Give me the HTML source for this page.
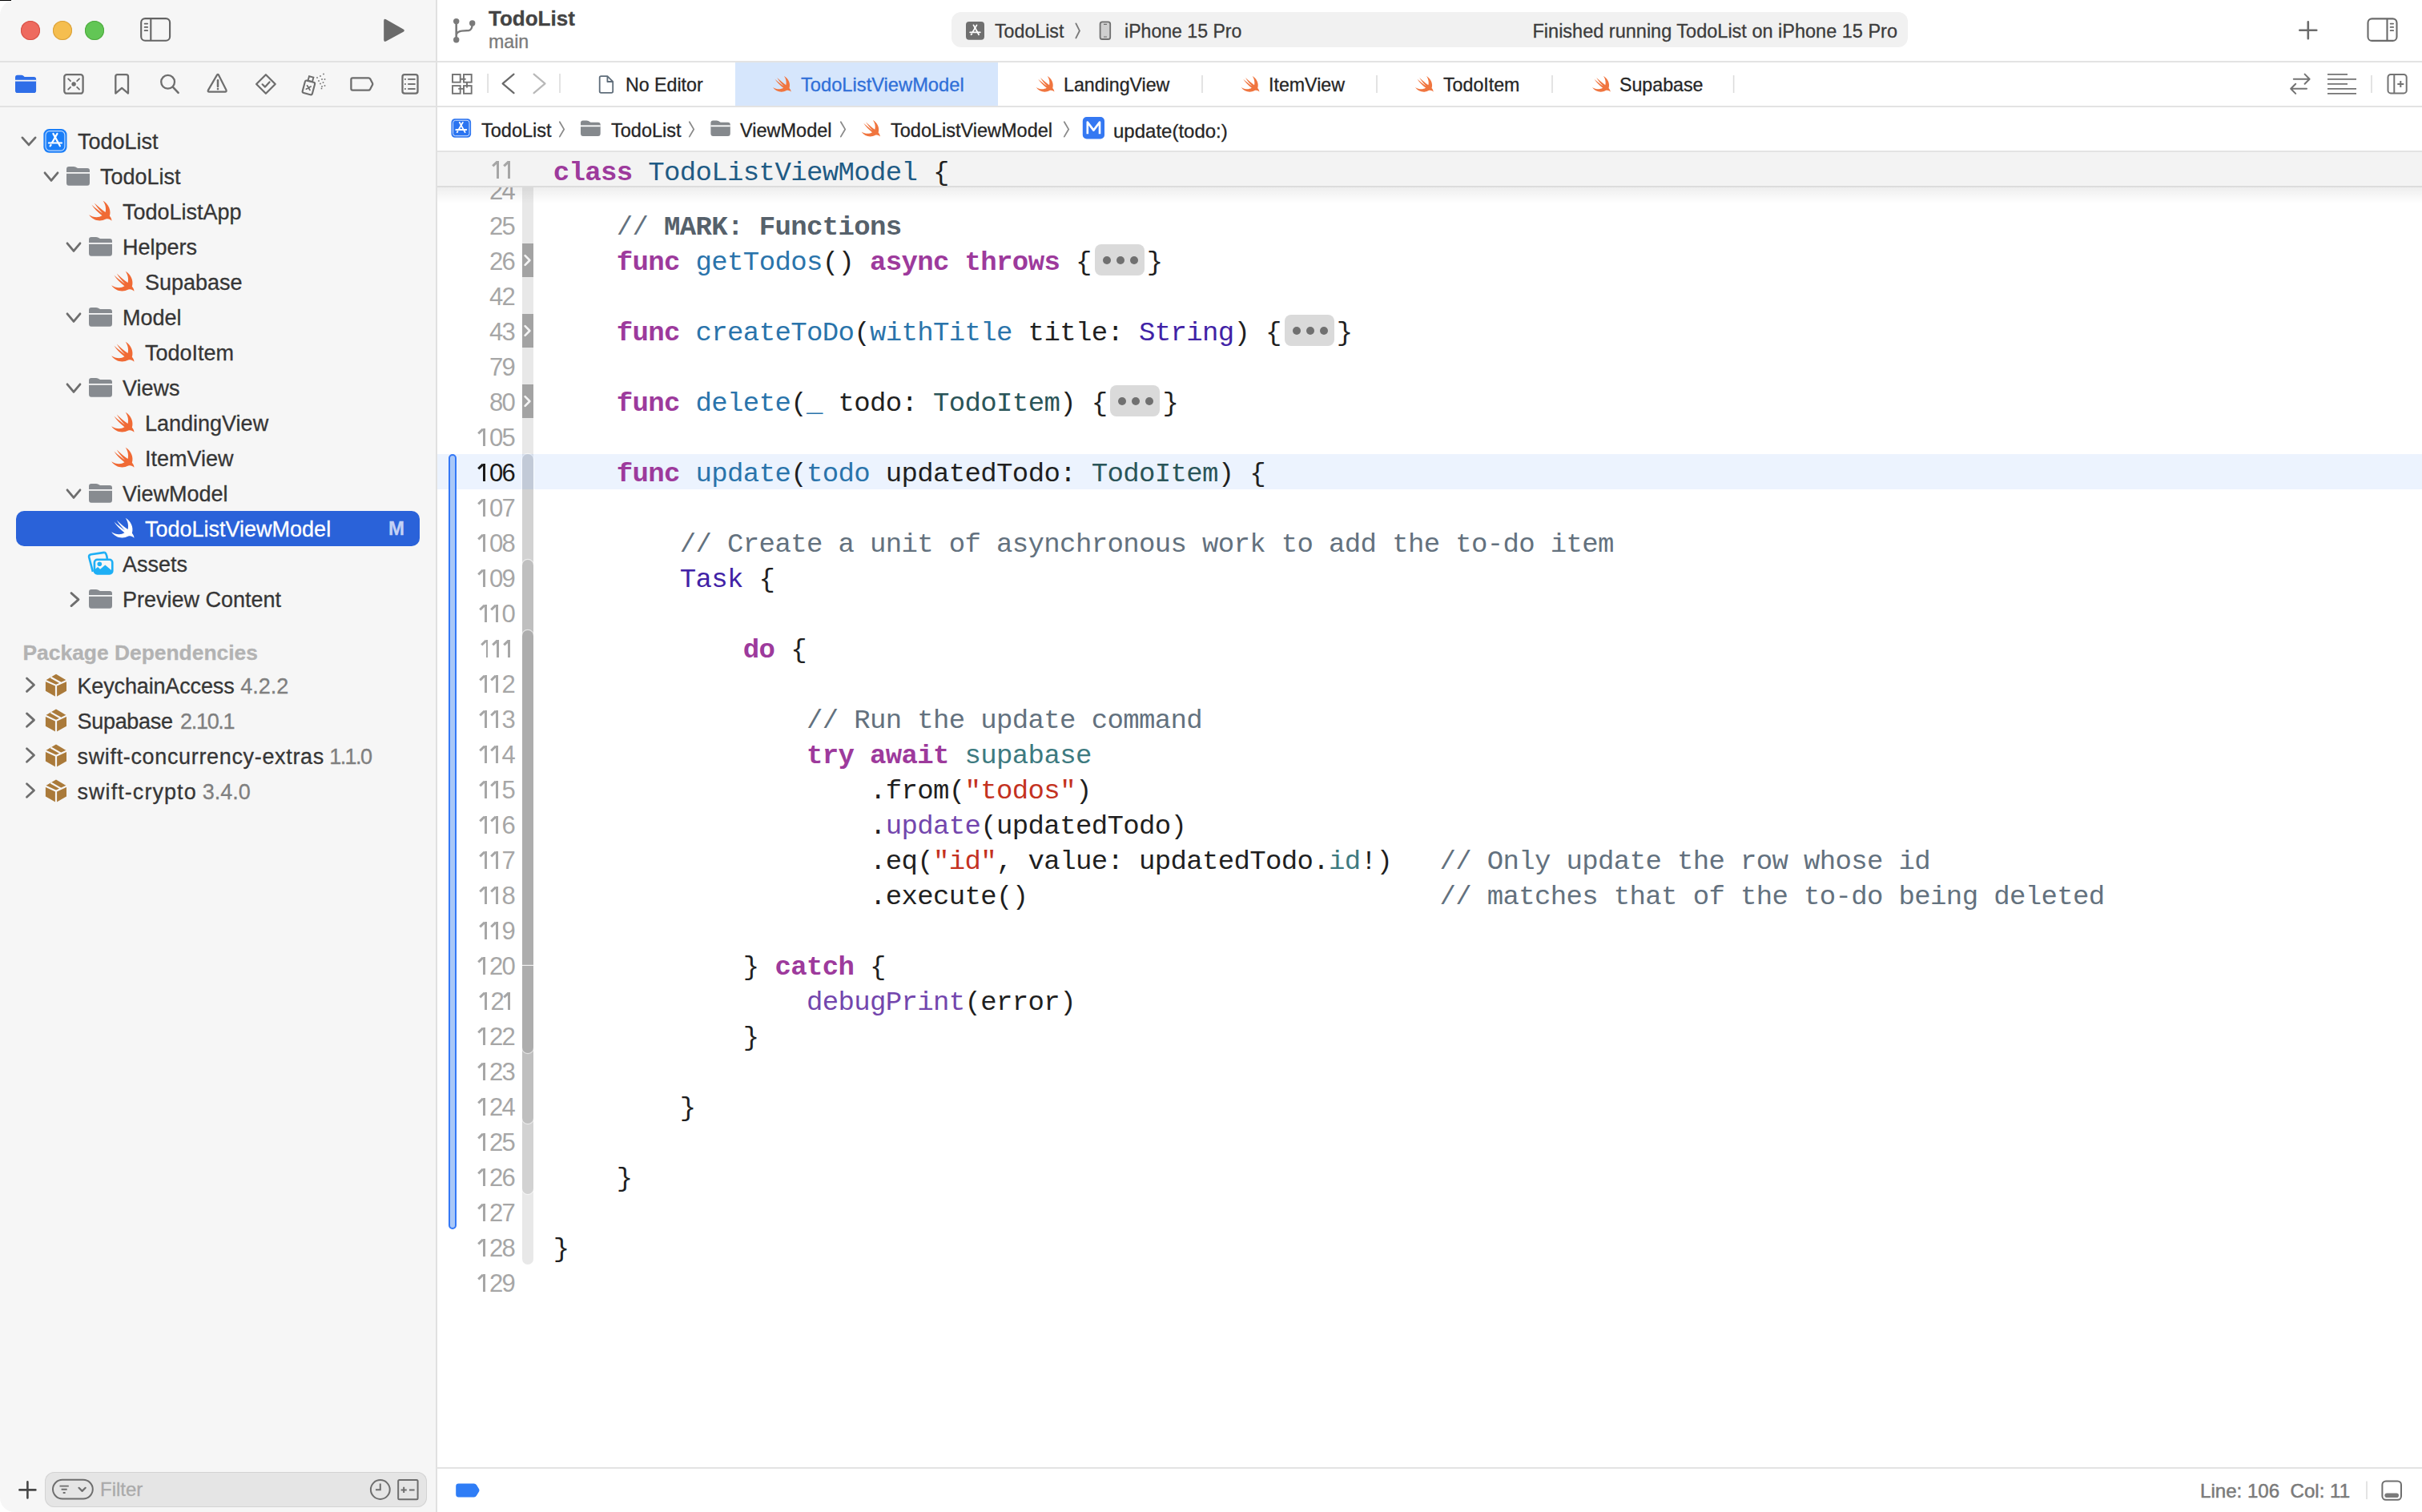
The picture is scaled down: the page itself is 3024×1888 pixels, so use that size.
<!DOCTYPE html>
<html><head><meta charset="utf-8"><style>
*{margin:0;padding:0;box-sizing:border-box}
html,body{width:3024px;height:1888px;overflow:hidden;background:#fff}
body{position:relative;font-family:"Liberation Sans",sans-serif;color:#262626}
.a{position:absolute}
.t{position:absolute;white-space:pre;line-height:1;-webkit-text-stroke:0.3px currentColor}
.code{position:absolute;left:690.7px;font-family:"Liberation Mono",monospace;font-size:34px;letter-spacing:-0.64px;line-height:44px;color:#1f1f1f;white-space:pre}
.ln{position:absolute;left:560px;width:82px;text-align:right;font-family:"Liberation Sans",sans-serif;font-size:31px;line-height:44px;color:#a6a6a6;letter-spacing:-1.7px}
.d1{display:inline-block;position:relative;width:15.54px;height:1px;margin-right:-1.7px;letter-spacing:0}
.d1:before{content:"";position:absolute;left:6.1px;bottom:0;width:2.9px;height:21.7px;background:currentColor}
.d1:after{content:"";position:absolute;left:-0.6px;bottom:16.75px;width:8.4px;height:2.9px;background:currentColor;transform:rotate(-44deg)}
.k{color:#9d3a9c;font-weight:bold}
.c{color:#63717e}
.mk{color:#56616b;font-weight:bold}
.s{color:#c4321f}
.dt{color:#1f5b85}
.do{color:#2a74ab}
.ot{color:#4122a6}
.pt{color:#2a5558}
.pv{color:#3d7a80}
.of{color:#7346ad}
.fold{left:652px;width:14px;height:42px;background:#a3a3a3}
.pill{display:inline-block;position:relative;width:69px;height:44px;vertical-align:top}
.pill:before{content:"";position:absolute;left:4px;top:-0.6px;width:62px;height:39px;border-radius:8px;background:#dadada}
.pill i{position:absolute;top:14.2px;width:10px;height:10px;border-radius:5px;background:#707070}
</style></head><body>
<div class="a" style="left:0px;top:0px;width:544px;height:1888px;background:#f6f6f6;border-top-left-radius:19px;border-bottom-left-radius:18px"></div>
<div class="a" style="left:0px;top:0px;width:14px;height:1px;background:#000;"></div>
<div class="a" style="left:544px;top:0px;width:2px;height:1888px;background:#e1e1e1;"></div>
<div class="a" style="left:0px;top:76px;width:544px;height:2px;background:#e2e2e2;"></div>
<div class="a" style="left:546px;top:76px;width:2478px;height:2px;background:#e3e3e3;"></div>
<div class="a" style="left:0px;top:132px;width:544px;height:2px;background:#e2e2e2;"></div>
<div class="a" style="left:546px;top:132px;width:2478px;height:2px;background:#e3e3e3;"></div>
<div class="a" style="left:546px;top:188px;width:2478px;height:2px;background:#e3e3e3;"></div>
<div class="a" style="left:546px;top:1832px;width:2478px;height:2px;background:#e3e3e3;"></div>
<div class="a" style="left:26px;top:26px;width:24px;height:24px;border-radius:12px;background:#ee6a5f;box-shadow:inset 0 0 0 1px #d55046"></div>
<div class="a" style="left:66px;top:26px;width:24px;height:24px;border-radius:12px;background:#f5be4f;box-shadow:inset 0 0 0 1px #d9a03a"></div>
<div class="a" style="left:106px;top:26px;width:24px;height:24px;border-radius:12px;background:#62c655;box-shadow:inset 0 0 0 1px #4ea93f"></div>
<div class="a" style="left:20px;top:638px;width:504px;height:44px;background:#2a62d9;border-radius:10px"></div>
<div class="t" style="left:97px;top:164px;font-size:27px;color:#363636;font-weight:normal;">TodoList</div>
<div class="t" style="left:125px;top:208px;font-size:27px;color:#363636;font-weight:normal;">TodoList</div>
<div class="t" style="left:153px;top:252px;font-size:27px;color:#363636;font-weight:normal;">TodoListApp</div>
<div class="t" style="left:153px;top:296px;font-size:27px;color:#363636;font-weight:normal;">Helpers</div>
<div class="t" style="left:181px;top:340px;font-size:27px;color:#363636;font-weight:normal;">Supabase</div>
<div class="t" style="left:153px;top:384px;font-size:27px;color:#363636;font-weight:normal;">Model</div>
<div class="t" style="left:181px;top:428px;font-size:27px;color:#363636;font-weight:normal;">TodoItem</div>
<div class="t" style="left:153px;top:472px;font-size:27px;color:#363636;font-weight:normal;">Views</div>
<div class="t" style="left:181px;top:516px;font-size:27px;color:#363636;font-weight:normal;">LandingView</div>
<div class="t" style="left:181px;top:560px;font-size:27px;color:#363636;font-weight:normal;">ItemView</div>
<div class="t" style="left:153px;top:604px;font-size:27px;color:#363636;font-weight:normal;">ViewModel</div>
<div class="t" style="left:181px;top:648px;font-size:27px;color:#fff;font-weight:normal;">TodoListViewModel</div>
<div class="t" style="left:153px;top:692px;font-size:27px;color:#363636;font-weight:normal;">Assets</div>
<div class="t" style="left:153px;top:736px;font-size:27px;color:#363636;font-weight:normal;">Preview Content</div>
<div class="t" style="left:485px;top:648px;font-size:24px;color:#c4d2f5;font-weight:bold;">M</div>
<div class="t" style="left:28.5px;top:802px;font-size:26.4px;color:#b3b3b3;font-weight:bold;">Package Dependencies</div>
<div class="t" style="left:96.5px;top:844px;font-size:27px;color:#363636;font-weight:normal;letter-spacing:-0.15px">KeychainAccess</div>
<div class="t" style="left:300.2px;top:844px;font-size:27px;color:#7f7f7f;font-weight:normal;letter-spacing:0px">4.2.2</div>
<div class="t" style="left:96.5px;top:888px;font-size:27px;color:#363636;font-weight:normal;letter-spacing:-0.3px">Supabase</div>
<div class="t" style="left:225px;top:888px;font-size:27px;color:#7f7f7f;font-weight:normal;letter-spacing:-1.3px">2.10.1</div>
<div class="t" style="left:96.5px;top:932px;font-size:27px;color:#363636;font-weight:normal;letter-spacing:0.66px">swift-concurrency-extras</div>
<div class="t" style="left:411.2px;top:932px;font-size:27px;color:#7f7f7f;font-weight:normal;letter-spacing:-1.55px">1.1.0</div>
<div class="t" style="left:96.5px;top:976px;font-size:27px;color:#363636;font-weight:normal;letter-spacing:1.06px">swift-crypto</div>
<div class="t" style="left:252.8px;top:976px;font-size:27px;color:#7f7f7f;font-weight:normal;letter-spacing:0px">3.4.0</div>
<div class="a" style="left:56px;top:1838px;width:477px;height:44px;background:#e5e5e5;border-radius:12px;box-shadow:inset 0 0 0 1px #d3d3d3"></div>
<div class="t" style="left:125px;top:1848px;font-size:24px;color:#aaaaaa;font-weight:normal;">Filter</div>
<div class="t" style="left:610px;top:10px;font-size:26px;color:#444444;font-weight:bold;">TodoList</div>
<div class="t" style="left:610px;top:41px;font-size:23.2px;color:#7a7a7a;font-weight:normal;">main</div>
<div class="a" style="left:1188px;top:15px;width:1194px;height:44px;background:#f1f1f1;border-radius:12px"></div>
<div class="t" style="left:1242px;top:28px;font-size:23.2px;color:#3c3c3c;font-weight:normal;">TodoList</div>
<div class="t" style="left:1404px;top:28px;font-size:23.1px;color:#3c3c3c;font-weight:normal;">iPhone 15 Pro</div>
<div class="t" style="left:1913.5px;top:28px;font-size:23.5px;color:#3c3c3c;font-weight:normal;">Finished running TodoList on iPhone 15 Pro</div>
<div class="a" style="left:918px;top:78px;width:328px;height:54px;background:#d6e6fc;"></div>
<div class="t" style="left:781px;top:95px;font-size:23.2px;color:#262626;font-weight:normal;">No Editor</div>
<div class="t" style="left:1000px;top:95px;font-size:23.7px;color:#2f6fd8;font-weight:normal;">TodoListViewModel</div>
<div class="t" style="left:1328px;top:95px;font-size:23.2px;color:#262626;font-weight:normal;">LandingView</div>
<div class="t" style="left:1584px;top:95px;font-size:23.2px;color:#262626;font-weight:normal;">ItemView</div>
<div class="t" style="left:1802px;top:95px;font-size:23.2px;color:#262626;font-weight:normal;">TodoItem</div>
<div class="t" style="left:2022px;top:95px;font-size:23.2px;color:#262626;font-weight:normal;">Supabase</div>
<div class="t" style="left:601px;top:151.5px;font-size:23.5px;color:#262626;font-weight:normal;">TodoList</div>
<div class="t" style="left:763px;top:151.5px;font-size:23.5px;color:#262626;font-weight:normal;">TodoList</div>
<div class="t" style="left:924px;top:151.5px;font-size:23.5px;color:#262626;font-weight:normal;">ViewModel</div>
<div class="t" style="left:1112px;top:151.5px;font-size:23.5px;color:#262626;font-weight:normal;">TodoListViewModel</div>
<div class="t" style="left:1390px;top:151.5px;font-size:24px;color:#262626;font-weight:normal;">update(todo:)</div>

<div class="a" style="left:546px;top:567px;width:2478px;height:44px;background:#ecf3fe"></div>
<div class="a" style="left:652px;top:234px;width:14px;height:1345px;background:#e8e8e8;border-radius:0 0 7px 7px"></div>
<div class="a fold" style="top:304px"></div>
<div class="a fold" style="top:392px"></div>
<div class="a fold" style="top:480px"></div>
<div class="a" style="left:652px;top:567px;width:14px;height:924px;background:#d2d2d2;border-radius:7px;box-shadow:0 0 0 1.2px rgba(255,255,255,0.55)"></div>
<div class="a" style="left:652px;top:699px;width:14px;height:704px;background:#bfbfbf;border-radius:7px;box-shadow:0 0 0 1.2px rgba(255,255,255,0.55)"></div>
<div class="a" style="left:652px;top:787px;width:14px;height:418px;background:#adadad;border-radius:7px 7px 0 0;box-shadow:0 0 0 1.2px rgba(255,255,255,0.55)"></div>
<div class="a" style="left:652px;top:1206px;width:14px;height:109px;background:#adadad;border-radius:0 0 7px 7px;box-shadow:0 0 0 1.2px rgba(255,255,255,0.55)"></div>
<div class="a" style="left:652px;top:567px;width:14px;height:44px;background:rgba(110,160,240,0.16)"></div>
<div class="a" style="left:560px;top:567px;width:10px;height:968px;background:#a9c8f8;border:2px solid #3478f6;border-radius:5px"></div>
<div class="ln" style="top:216.5px"><div>24</div><div>25</div><div>26</div><div>42</div><div>43</div><div>79</div><div>80</div><div><i class="d1"></i>05</div><div style="color:#1a1a1a"><i class="d1"></i>06</div><div><i class="d1"></i>07</div><div><i class="d1"></i>08</div><div><i class="d1"></i>09</div><div><i class="d1"></i><i class="d1"></i>0</div><div><i class="d1"></i><i class="d1"></i><i class="d1"></i></div><div><i class="d1"></i><i class="d1"></i>2</div><div><i class="d1"></i><i class="d1"></i>3</div><div><i class="d1"></i><i class="d1"></i>4</div><div><i class="d1"></i><i class="d1"></i>5</div><div><i class="d1"></i><i class="d1"></i>6</div><div><i class="d1"></i><i class="d1"></i>7</div><div><i class="d1"></i><i class="d1"></i>8</div><div><i class="d1"></i><i class="d1"></i>9</div><div><i class="d1"></i>20</div><div><i class="d1"></i>2<i class="d1"></i></div><div><i class="d1"></i>22</div><div><i class="d1"></i>23</div><div><i class="d1"></i>24</div><div><i class="d1"></i>25</div><div><i class="d1"></i>26</div><div><i class="d1"></i>27</div><div><i class="d1"></i>28</div><div><i class="d1"></i>29</div></div>
<div class="code" style="top:218px"><div> </div><div>    <span class="c">// </span><span class="mk">MARK: Functions</span></div><div>    <span class="k">func</span> <span class="do">getTodos</span>() <span class="k">async</span> <span class="k">throws</span> {<span class="pill"><i style="left:14px"></i><i style="left:31px"></i><i style="left:48px"></i></span>}</div><div> </div><div>    <span class="k">func</span> <span class="do">createToDo</span>(<span class="do">withTitle</span> title: <span class="ot">String</span>) {<span class="pill"><i style="left:14px"></i><i style="left:31px"></i><i style="left:48px"></i></span>}</div><div> </div><div>    <span class="k">func</span> <span class="do">delete</span>(<span class="do">_</span> todo: <span class="pt">TodoItem</span>) {<span class="pill"><i style="left:14px"></i><i style="left:31px"></i><i style="left:48px"></i></span>}</div><div> </div><div>    <span class="k">func</span> <span class="do">update</span>(<span class="do">todo</span> updatedTodo: <span class="pt">TodoItem</span>) {</div><div> </div><div>        <span class="c">// Create a unit of asynchronous work to add the to-do item</span></div><div>        <span class="ot">Task</span> {</div><div> </div><div>            <span class="k">do</span> {</div><div> </div><div>                <span class="c">// Run the update command</span></div><div>                <span class="k">try</span> <span class="k">await</span> <span class="pv">supabase</span></div><div>                    .from(<span class="s">"todos"</span>)</div><div>                    .<span class="of">update</span>(updatedTodo)</div><div>                    .eq(<span class="s">"id"</span>, value: updatedTodo.<span class="pv">id</span>!)   <span class="c">// Only update the row whose id</span></div><div>                    .execute()                          <span class="c">// matches that of the to-do being deleted</span></div><div> </div><div>            } <span class="k">catch</span> {</div><div>                <span class="of">debugPrint</span>(error)</div><div>            }</div><div> </div><div>        }</div><div> </div><div>    }</div><div> </div><div>}</div><div> </div></div>
<div class="a" style="left:546px;top:190px;width:2478px;height:42px;background:#f3f3f3;overflow:hidden">
 <div class="ln" style="left:14px;top:1px"><i class="d1"></i><i class="d1"></i></div>
 <div class="code" style="left:144.7px;top:3.5px"><span class="k">class</span> <span class="dt">TodoListViewModel</span> {</div>
</div>
<div class="a" style="left:546px;top:232px;width:2478px;height:2px;background:#dcdcdc"></div>
<div class="a" style="left:546px;top:234px;width:2478px;height:20px;background:linear-gradient(rgba(0,0,0,0.065),rgba(0,0,0,0))"></div>

<div class="t" style="left:2747px;top:1850px;font-size:24.1px;color:#7a7a7a;font-weight:normal;-webkit-text-stroke:0.5px #7a7a7a">Line: 106  Col: 11</div>
<svg class="a" style="left:0;top:0" width="3024" height="1888"><rect x="176.2" y="23.1" width="35.9" height="27.7" rx="5" fill="none" stroke="#646464" stroke-width="2.1"/><line x1="188.3" y1="23" x2="188.3" y2="51" stroke="#646464" stroke-width="2.1"/><line x1="180.6" y1="29.6" x2="184.2" y2="29.6" stroke="#646464" stroke-width="1.7" stroke-linecap="round"/><line x1="180.6" y1="33.9" x2="184.2" y2="33.9" stroke="#646464" stroke-width="1.7" stroke-linecap="round"/><line x1="180.6" y1="38.2" x2="184.2" y2="38.2" stroke="#646464" stroke-width="1.7" stroke-linecap="round"/><path d="M482,24.3 Q479.2,22.9 479.2,26 L479.2,49.8 Q479.2,52.9 482,51.5 L503.6,39.8 Q506,38.1 503.6,36.5 Z" fill="#6a6a6a"/><path d="M19,96.6 Q19,93.7 21.8,93.7 L26.6,93.7 Q28.2,93.7 29.6,95 L30.6,95.9 L42.3,95.9 Q45.1,95.9 45.1,98.7 L45.1,113.2 Q45.1,116 42.3,116 L21.8,116 Q19,116 19,113.2 Z" fill="#2f6ee8"/><rect x="19" y="99.8" width="26.1" height="1.8" fill="#f6f6f6"/><rect x="80.3" y="93.1" width="23.3" height="23.6" rx="3" fill="none" stroke="#6e6e6e" stroke-width="2.3"/><circle cx="92.1" cy="105" r="2.7" fill="#6e6e6e"/><path d="M85.2,98.4 L88,101.2 M99,98.4 L96.2,101.2 M85.2,111.6 L88,108.8 M99,111.6 L96.2,108.8" stroke="#6e6e6e" stroke-width="1.9" stroke-linecap="round"/><path d="M144.3,116.6 L144.3,95.5 Q144.3,93.1 146.7,93.1 L157.6,93.1 Q160,93.1 160,95.5 L160,116.6 L152.15,109.9 Z" fill="none" stroke="#6e6e6e" stroke-width="2.3" stroke-linejoin="round"/><circle cx="209.6" cy="102.3" r="8.4" fill="none" stroke="#6e6e6e" stroke-width="2.3"/><line x1="215.8" y1="108.6" x2="222.6" y2="115.8" stroke="#6e6e6e" stroke-width="2.6" stroke-linecap="round"/><path d="M272,93.4 Q272.9,92.2 273.8,93.4 L283.4,112.6 Q284,114.6 282,114.6 L262,114.6 Q260,114.6 260.8,112.6 Z" transform="translate(-0.9,0)" fill="none" stroke="#6e6e6e" stroke-width="2.2" stroke-linejoin="round"/><path d="M272,100.3 L272,108" stroke="#6e6e6e" stroke-width="2.5" stroke-linecap="round"/><circle cx="272" cy="111.1" r="1.3" fill="#6e6e6e"/><path d="M331.9,93.3 L343.7,105 L331.9,116.7 L320.1,105 Z" fill="none" stroke="#6e6e6e" stroke-width="2.3" stroke-linejoin="round"/><path d="M327.6,105.3 L331,108.6 L336.5,102.4" fill="none" stroke="#6e6e6e" stroke-width="2.2" stroke-linecap="round" stroke-linejoin="round"/><g transform="rotate(15 386 106)"><rect x="380" y="101.5" width="12.6" height="16" rx="2" fill="none" stroke="#6e6e6e" stroke-width="2.1"/><rect x="383.2" y="95.6" width="5.6" height="5.6" fill="none" stroke="#6e6e6e" stroke-width="1.9"/><path d="M383.8,107.4 L388.6,112 M388.6,107.4 L383.8,112" stroke="#6e6e6e" stroke-width="1.7" stroke-linecap="round"/></g><rect x="395.2" y="96.2" width="1.6" height="1.6" fill="#6e6e6e"/><rect x="399.2" y="94.2" width="1.6" height="1.6" fill="#6e6e6e"/><rect x="403.2" y="91.7" width="1.6" height="1.6" fill="#6e6e6e"/><rect x="397.2" y="100.2" width="1.6" height="1.6" fill="#6e6e6e"/><rect x="401.2" y="98.2" width="1.6" height="1.6" fill="#6e6e6e"/><rect x="404.7" y="98.2" width="1.6" height="1.6" fill="#6e6e6e"/><rect x="399.2" y="103.7" width="1.6" height="1.6" fill="#6e6e6e"/><rect x="402.7" y="102.2" width="1.6" height="1.6" fill="#6e6e6e"/><rect x="401.2" y="107.2" width="1.6" height="1.6" fill="#6e6e6e"/><rect x="404.7" y="106.2" width="1.6" height="1.6" fill="#6e6e6e"/><rect x="400.7" y="109.7" width="1.6" height="1.6" fill="#6e6e6e"/><path d="M440.2,97.3 L460.2,97.3 Q461.4,97.3 462.2,98.5 L465.1,104 Q465.4,104.9 465.1,105.8 L462.2,111.3 Q461.4,112.6 460.2,112.6 L440.2,112.6 Q438.4,112.6 438.4,110.8 L438.4,99.1 Q438.4,97.3 440.2,97.3 Z" fill="none" stroke="#6e6e6e" stroke-width="2.3" stroke-linejoin="round"/><rect x="502.5" y="93.1" width="19" height="23.6" rx="2.6" fill="none" stroke="#6e6e6e" stroke-width="2.3"/><rect x="505" y="98.0" width="1.8" height="1.8" fill="#6e6e6e"/><line x1="509.2" y1="98.9" x2="518.6" y2="98.9" stroke="#6e6e6e" stroke-width="1.9"/><rect x="505" y="104.1" width="1.8" height="1.8" fill="#6e6e6e"/><line x1="509.2" y1="105.0" x2="518.6" y2="105.0" stroke="#6e6e6e" stroke-width="1.9"/><rect x="505" y="110.1" width="1.8" height="1.8" fill="#6e6e6e"/><line x1="509.2" y1="111.0" x2="518.6" y2="111.0" stroke="#6e6e6e" stroke-width="1.9"/><path d="M27.9,171.9 L36.0,180.9 L44.1,171.9" fill="none" stroke="#6e6e6e" stroke-width="2.8" stroke-linecap="round" stroke-linejoin="round"/><rect x="54.4" y="161.1" width="29.1" height="29.6" rx="7" fill="#1a7ef8"/><rect x="57.0" y="163.7" width="23.9" height="24.4" rx="5" fill="none" stroke="#bcd9ff" stroke-width="1.2"/><g fill="none" stroke="#ffffff" stroke-width="2.2" stroke-linecap="round"><path d="M66.4,166.9 L74.9,182.3"/><path d="M71.5,166.9 L65.1,178.0"/><path d="M60.9,178.5 L77.0,178.5"/><path d="M62.6,182.3 L63.6,181.0"/></g><path d="M56.0,215.8 L64.0,225.4 L72.0,215.8" fill="none" stroke="#6e6e6e" stroke-width="2.8" stroke-linecap="round" stroke-linejoin="round"/><path d="M83,210.9 Q83,207.9 86,207.9 H92.02 Q94.02,207.9 97.02,210.1 H109 Q112,210.1 112,213.1 V228.20000000000002 Q112,231.70000000000002 109,231.70000000000002 H86 Q83,231.70000000000002 83,228.20000000000002 Z" fill="#878b90"/><rect x="83.0" y="215.0" width="29.0" height="1.8" fill="#f6f6f6"/><path transform="translate(111.20,250.80) scale(0.9900,1.0154)" d="M28.5,24.5 C26.8,22.6 24.2,21.6 21.2,22.4 C13.5,26.4 4.6,23.9 0,17.2 C5.2,20.6 12,21 16.4,18.2 C11.2,14.2 6.4,9.4 3.2,4.6 C8,8.8 13,12.8 17.2,15.4 C13.2,11.8 9.4,7 6.6,2.6 C11.2,6.8 16.6,11.4 20.6,14 C21.8,9.4 20.6,3.8 17.6,0 C24.4,3.8 28.2,11.4 25.9,18.6 C27.6,20.4 28.6,22.6 28.5,24.5 Z" fill="#f06a35"/><path d="M84.0,303.8 L92.0,313.4 L100.0,303.8" fill="none" stroke="#6e6e6e" stroke-width="2.8" stroke-linecap="round" stroke-linejoin="round"/><path d="M111,298.9 Q111,295.9 114,295.9 H120.02 Q122.02,295.9 125.02,298.09999999999997 H137 Q140,298.09999999999997 140,301.09999999999997 V316.2 Q140,319.7 137,319.7 H114 Q111,319.7 111,316.2 Z" fill="#878b90"/><rect x="111.0" y="303.0" width="29.0" height="1.8" fill="#f6f6f6"/><path transform="translate(139.20,338.80) scale(0.9900,1.0154)" d="M28.5,24.5 C26.8,22.6 24.2,21.6 21.2,22.4 C13.5,26.4 4.6,23.9 0,17.2 C5.2,20.6 12,21 16.4,18.2 C11.2,14.2 6.4,9.4 3.2,4.6 C8,8.8 13,12.8 17.2,15.4 C13.2,11.8 9.4,7 6.6,2.6 C11.2,6.8 16.6,11.4 20.6,14 C21.8,9.4 20.6,3.8 17.6,0 C24.4,3.8 28.2,11.4 25.9,18.6 C27.6,20.4 28.6,22.6 28.5,24.5 Z" fill="#f06a35"/><path d="M84.0,391.8 L92.0,401.4 L100.0,391.8" fill="none" stroke="#6e6e6e" stroke-width="2.8" stroke-linecap="round" stroke-linejoin="round"/><path d="M111,386.9 Q111,383.9 114,383.9 H120.02 Q122.02,383.9 125.02,386.09999999999997 H137 Q140,386.09999999999997 140,389.09999999999997 V404.2 Q140,407.7 137,407.7 H114 Q111,407.7 111,404.2 Z" fill="#878b90"/><rect x="111.0" y="391.0" width="29.0" height="1.8" fill="#f6f6f6"/><path transform="translate(139.20,426.80) scale(0.9900,1.0154)" d="M28.5,24.5 C26.8,22.6 24.2,21.6 21.2,22.4 C13.5,26.4 4.6,23.9 0,17.2 C5.2,20.6 12,21 16.4,18.2 C11.2,14.2 6.4,9.4 3.2,4.6 C8,8.8 13,12.8 17.2,15.4 C13.2,11.8 9.4,7 6.6,2.6 C11.2,6.8 16.6,11.4 20.6,14 C21.8,9.4 20.6,3.8 17.6,0 C24.4,3.8 28.2,11.4 25.9,18.6 C27.6,20.4 28.6,22.6 28.5,24.5 Z" fill="#f06a35"/><path d="M84.0,479.8 L92.0,489.4 L100.0,479.8" fill="none" stroke="#6e6e6e" stroke-width="2.8" stroke-linecap="round" stroke-linejoin="round"/><path d="M111,474.9 Q111,471.9 114,471.9 H120.02 Q122.02,471.9 125.02,474.09999999999997 H137 Q140,474.09999999999997 140,477.09999999999997 V492.2 Q140,495.7 137,495.7 H114 Q111,495.7 111,492.2 Z" fill="#878b90"/><rect x="111.0" y="479.0" width="29.0" height="1.8" fill="#f6f6f6"/><path transform="translate(139.20,514.80) scale(0.9900,1.0154)" d="M28.5,24.5 C26.8,22.6 24.2,21.6 21.2,22.4 C13.5,26.4 4.6,23.9 0,17.2 C5.2,20.6 12,21 16.4,18.2 C11.2,14.2 6.4,9.4 3.2,4.6 C8,8.8 13,12.8 17.2,15.4 C13.2,11.8 9.4,7 6.6,2.6 C11.2,6.8 16.6,11.4 20.6,14 C21.8,9.4 20.6,3.8 17.6,0 C24.4,3.8 28.2,11.4 25.9,18.6 C27.6,20.4 28.6,22.6 28.5,24.5 Z" fill="#f06a35"/><path transform="translate(139.20,558.80) scale(0.9900,1.0154)" d="M28.5,24.5 C26.8,22.6 24.2,21.6 21.2,22.4 C13.5,26.4 4.6,23.9 0,17.2 C5.2,20.6 12,21 16.4,18.2 C11.2,14.2 6.4,9.4 3.2,4.6 C8,8.8 13,12.8 17.2,15.4 C13.2,11.8 9.4,7 6.6,2.6 C11.2,6.8 16.6,11.4 20.6,14 C21.8,9.4 20.6,3.8 17.6,0 C24.4,3.8 28.2,11.4 25.9,18.6 C27.6,20.4 28.6,22.6 28.5,24.5 Z" fill="#f06a35"/><path d="M84.0,611.8 L92.0,621.4 L100.0,611.8" fill="none" stroke="#6e6e6e" stroke-width="2.8" stroke-linecap="round" stroke-linejoin="round"/><path d="M111,606.9 Q111,603.9 114,603.9 H120.02 Q122.02,603.9 125.02,606.1 H137 Q140,606.1 140,609.1 V624.1999999999999 Q140,627.6999999999999 137,627.6999999999999 H114 Q111,627.6999999999999 111,624.1999999999999 Z" fill="#878b90"/><rect x="111.0" y="611.0" width="29.0" height="1.8" fill="#f6f6f6"/><path transform="translate(139.20,646.80) scale(0.9900,1.0154)" d="M28.5,24.5 C26.8,22.6 24.2,21.6 21.2,22.4 C13.5,26.4 4.6,23.9 0,17.2 C5.2,20.6 12,21 16.4,18.2 C11.2,14.2 6.4,9.4 3.2,4.6 C8,8.8 13,12.8 17.2,15.4 C13.2,11.8 9.4,7 6.6,2.6 C11.2,6.8 16.6,11.4 20.6,14 C21.8,9.4 20.6,3.8 17.6,0 C24.4,3.8 28.2,11.4 25.9,18.6 C27.6,20.4 28.6,22.6 28.5,24.5 Z" fill="#ffffff"/><path d="M115.9,713.9 L111.1,695.5 Q110.8,692.7 113.9,692.3 L130.1,689.9" fill="none" stroke="#1eaff5" stroke-width="2.6" stroke-linejoin="round"/><path d="M130.1,689.9 Q132.9,689.9 133.9,698.0" fill="none" stroke="#1eaff5" stroke-width="2.6"/><rect x="117.9" y="698.8" width="22.4" height="17.6" rx="3.5" fill="#f6f6f6" stroke="#1eaff5" stroke-width="2.6"/><circle cx="124.3" cy="704.3" r="2.8" fill="#1eaff5"/><path d="M117.9,711.5 L122.1,708.1 L125.1,710.7 L131.3,705.5 L140.3,712.9 L140.3,712.9 Q140.3,716.4 136.8,716.4 L121.3,716.4 Q117.9,716.4 117.9,712.9 Z" fill="#1eaff5"/><path d="M89.0,740.6 L98.0,748.6 L89.0,756.6" fill="none" stroke="#6e6e6e" stroke-width="2.8" stroke-linecap="round" stroke-linejoin="round"/><path d="M111,738.9 Q111,735.9 114,735.9 H120.02 Q122.02,735.9 125.02,738.1 H137 Q140,738.1 140,741.1 V756.1999999999999 Q140,759.6999999999999 137,759.6999999999999 H114 Q111,759.6999999999999 111,756.1999999999999 Z" fill="#878b90"/><rect x="111.0" y="743.0" width="29.0" height="1.8" fill="#f6f6f6"/><path d="M33.5,847.0 L42.5,855.2 L33.5,863.4" fill="none" stroke="#6e6e6e" stroke-width="2.8" stroke-linecap="round" stroke-linejoin="round"/><path d="M70.0,841.7 L83.0,849.4 L83.0,862.8 L70.0,870.2 L56.9,862.8 L56.9,849.4 Z" fill="#aa7a3a"/><path d="M55.9,849.4 L70.0,855.9 L84.0,849.4 M70.0,855.9 L70.0,871.2 M63.4,845.7 L76.0,852.8" fill="none" stroke="#f6f6f6" stroke-width="2.2"/><path d="M33.5,890.9 L42.5,899.1 L33.5,907.3" fill="none" stroke="#6e6e6e" stroke-width="2.8" stroke-linecap="round" stroke-linejoin="round"/><path d="M70.0,885.6 L83.0,893.3 L83.0,906.7 L70.0,914.1 L56.9,906.7 L56.9,893.3 Z" fill="#aa7a3a"/><path d="M55.9,893.3 L70.0,899.9 L84.0,893.3 M70.0,899.9 L70.0,915.1 M63.4,889.6 L76.0,896.7" fill="none" stroke="#f6f6f6" stroke-width="2.2"/><path d="M33.5,934.8 L42.5,943.0 L33.5,951.2" fill="none" stroke="#6e6e6e" stroke-width="2.8" stroke-linecap="round" stroke-linejoin="round"/><path d="M70.0,929.5 L83.0,937.2 L83.0,950.6 L70.0,958.0 L56.9,950.6 L56.9,937.2 Z" fill="#aa7a3a"/><path d="M55.9,937.2 L70.0,943.8 L84.0,937.2 M70.0,943.8 L70.0,959.0 M63.4,933.5 L76.0,940.6" fill="none" stroke="#f6f6f6" stroke-width="2.2"/><path d="M33.5,978.8 L42.5,987.0 L33.5,995.2" fill="none" stroke="#6e6e6e" stroke-width="2.8" stroke-linecap="round" stroke-linejoin="round"/><path d="M70.0,973.5 L83.0,981.2 L83.0,994.6 L70.0,1002.0 L56.9,994.6 L56.9,981.2 Z" fill="#aa7a3a"/><path d="M55.9,981.2 L70.0,987.8 L84.0,981.2 M70.0,987.8 L70.0,1003.0 M63.4,977.5 L76.0,984.6" fill="none" stroke="#f6f6f6" stroke-width="2.2"/><path d="M24.4,1860.4 H44.4 M34.4,1850.4 V1870.4" stroke="#474747" stroke-width="2.6" stroke-linecap="round"/><rect x="66" y="1847.7" width="49.8" height="23.8" rx="11.9" fill="none" stroke="#6e6e6e" stroke-width="2"/><path d="M74.5,1855.6 H85.8 M76.6,1859.8 H83.7 M78.7,1864 H81.6" stroke="#6e6e6e" stroke-width="1.9"/><path d="M98.5,1857.8 L102.6,1861.9 L106.7,1857.8" fill="none" stroke="#6e6e6e" stroke-width="2.2" stroke-linecap="round" stroke-linejoin="round"/><circle cx="474.8" cy="1860" r="11.9" fill="none" stroke="#6e6e6e" stroke-width="2"/><path d="M474.8,1852.6 V1860.2 H469" fill="none" stroke="#6e6e6e" stroke-width="2"/><rect x="497.2" y="1848" width="24.4" height="24.2" rx="1.5" fill="none" stroke="#6e6e6e" stroke-width="2"/><path d="M500.6,1860.4 H507.8 M504.2,1856.8 V1864 M511,1860.4 H517.6" stroke="#6e6e6e" stroke-width="2"/><circle cx="569.7" cy="26.6" r="3.7" fill="#7a7a7a"/><circle cx="569.7" cy="49.8" r="3.7" fill="#7a7a7a"/><circle cx="589.7" cy="29" r="3.7" fill="#7a7a7a"/><path d="M569.7,27 V49" stroke="#7a7a7a" stroke-width="2.6"/><path d="M569.9,43 Q571,39.2 576.5,38.6 L585.5,38 Q589.4,37.4 589.7,30" fill="none" stroke="#7a7a7a" stroke-width="2.4"/><rect x="1206" y="26.9" width="23" height="22.8" rx="4" fill="#6f6f6f"/><g fill="none" stroke="#ffffff" stroke-width="1.8" stroke-linecap="round"><path d="M1215.5,31.4 L1222.1,43.2"/><path d="M1219.5,31.4 L1214.5,39.9"/><path d="M1211.2,40.3 L1223.8,40.3"/><path d="M1212.5,43.2 L1213.4,42.3"/></g><path d="M1343.4,29.4 L1347.9,38.4 L1343.4,47.4" fill="none" stroke="#7a7a7a" stroke-width="1.9" stroke-linecap="round"/><rect x="1373.6" y="27.4" width="12.6" height="21.6" rx="2.6" fill="#cfcfcf" stroke="#6f6f6f" stroke-width="1.8"/><path d="M1378,30.4 H1382 M1378,46 H1382" stroke="#6f6f6f" stroke-width="1.2"/><path d="M2871.3,37.8 H2892.3 M2881.8,27.3 V48.3" stroke="#6b6b6b" stroke-width="2.6" stroke-linecap="round"/><rect x="2956.5" y="23.4" width="36" height="27.5" rx="5" fill="none" stroke="#6b6b6b" stroke-width="2.1"/><line x1="2980.5" y1="23.4" x2="2980.5" y2="51" stroke="#6b6b6b" stroke-width="2.1"/><line x1="2984.6" y1="29.6" x2="2988.2" y2="29.6" stroke="#6b6b6b" stroke-width="1.7" stroke-linecap="round"/><line x1="2984.6" y1="33.9" x2="2988.2" y2="33.9" stroke="#6b6b6b" stroke-width="1.7" stroke-linecap="round"/><line x1="2984.6" y1="38.2" x2="2988.2" y2="38.2" stroke="#6b6b6b" stroke-width="1.7" stroke-linecap="round"/><g fill="none" stroke="#737373" stroke-width="1.9"><rect x="565" y="93" width="9.7" height="9.7"/><rect x="579" y="93" width="9.7" height="9.7"/><rect x="565" y="107.1" width="9.7" height="9.7"/><rect x="579" y="107.1" width="9.7" height="9.7"/><path d="M574.7,98.8 H581.6 M583,102.7 V109.6 M579,110.9 H572.2"/></g><rect x="608.3" y="92" width="1.6" height="24" fill="#dcdcdc"/><rect x="698.2" y="92" width="1.6" height="24" fill="#dcdcdc"/><path d="M641.5,92.6 L627.6,104.4 L641.5,116.2" fill="none" stroke="#6a6a6a" stroke-width="2.2" stroke-linecap="round" stroke-linejoin="round"/><path d="M666.6,92.6 L680.5,104.4 L666.6,116.2" fill="none" stroke="#b8b8b8" stroke-width="2.2" stroke-linecap="round" stroke-linejoin="round"/><path d="M750.5,95.2 H758.4 L765.2,102 V114 Q765.2,115.8 763.4,115.8 H750.5 Q748.7,115.8 748.7,114 V97 Q748.7,95.2 750.5,95.2 Z M758.4,95.2 V102 H765.2" fill="none" stroke="#5f6d7a" stroke-width="1.8" stroke-linejoin="round"/><path transform="translate(965.00,95.00) scale(0.7933,0.8077)" d="M28.5,24.5 C26.8,22.6 24.2,21.6 21.2,22.4 C13.5,26.4 4.6,23.9 0,17.2 C5.2,20.6 12,21 16.4,18.2 C11.2,14.2 6.4,9.4 3.2,4.6 C8,8.8 13,12.8 17.2,15.4 C13.2,11.8 9.4,7 6.6,2.6 C11.2,6.8 16.6,11.4 20.6,14 C21.8,9.4 20.6,3.8 17.6,0 C24.4,3.8 28.2,11.4 25.9,18.6 C27.6,20.4 28.6,22.6 28.5,24.5 Z" fill="#f0753f"/><path transform="translate(1293.70,95.00) scale(0.7933,0.8077)" d="M28.5,24.5 C26.8,22.6 24.2,21.6 21.2,22.4 C13.5,26.4 4.6,23.9 0,17.2 C5.2,20.6 12,21 16.4,18.2 C11.2,14.2 6.4,9.4 3.2,4.6 C8,8.8 13,12.8 17.2,15.4 C13.2,11.8 9.4,7 6.6,2.6 C11.2,6.8 16.6,11.4 20.6,14 C21.8,9.4 20.6,3.8 17.6,0 C24.4,3.8 28.2,11.4 25.9,18.6 C27.6,20.4 28.6,22.6 28.5,24.5 Z" fill="#f0753f"/><path transform="translate(1549.70,95.00) scale(0.7933,0.8077)" d="M28.5,24.5 C26.8,22.6 24.2,21.6 21.2,22.4 C13.5,26.4 4.6,23.9 0,17.2 C5.2,20.6 12,21 16.4,18.2 C11.2,14.2 6.4,9.4 3.2,4.6 C8,8.8 13,12.8 17.2,15.4 C13.2,11.8 9.4,7 6.6,2.6 C11.2,6.8 16.6,11.4 20.6,14 C21.8,9.4 20.6,3.8 17.6,0 C24.4,3.8 28.2,11.4 25.9,18.6 C27.6,20.4 28.6,22.6 28.5,24.5 Z" fill="#f0753f"/><path transform="translate(1767.00,95.00) scale(0.7933,0.8077)" d="M28.5,24.5 C26.8,22.6 24.2,21.6 21.2,22.4 C13.5,26.4 4.6,23.9 0,17.2 C5.2,20.6 12,21 16.4,18.2 C11.2,14.2 6.4,9.4 3.2,4.6 C8,8.8 13,12.8 17.2,15.4 C13.2,11.8 9.4,7 6.6,2.6 C11.2,6.8 16.6,11.4 20.6,14 C21.8,9.4 20.6,3.8 17.6,0 C24.4,3.8 28.2,11.4 25.9,18.6 C27.6,20.4 28.6,22.6 28.5,24.5 Z" fill="#f0753f"/><path transform="translate(1988.00,95.00) scale(0.7933,0.8077)" d="M28.5,24.5 C26.8,22.6 24.2,21.6 21.2,22.4 C13.5,26.4 4.6,23.9 0,17.2 C5.2,20.6 12,21 16.4,18.2 C11.2,14.2 6.4,9.4 3.2,4.6 C8,8.8 13,12.8 17.2,15.4 C13.2,11.8 9.4,7 6.6,2.6 C11.2,6.8 16.6,11.4 20.6,14 C21.8,9.4 20.6,3.8 17.6,0 C24.4,3.8 28.2,11.4 25.9,18.6 C27.6,20.4 28.6,22.6 28.5,24.5 Z" fill="#f0753f"/><rect x="1500.2" y="94" width="1.6" height="22" fill="#dcdcdc"/><rect x="1718.2" y="94" width="1.6" height="22" fill="#dcdcdc"/><rect x="1937.2" y="94" width="1.6" height="22" fill="#dcdcdc"/><rect x="2163.8" y="94" width="1.6" height="22" fill="#dcdcdc"/><path d="M2863.8,98.7 H2883.4 M2877.6,92.6 L2883.6,98.7 L2877.6,104.8 M2860.4,110.8 H2880 M2866.2,104.7 L2860.2,110.8 L2866.2,116.9" fill="none" stroke="#737373" stroke-width="2" stroke-linecap="round" stroke-linejoin="round"/><path d="M2906,92.8 H2931 M2906,98.8 H2942 M2906,104.8 H2931 M2906,110.8 H2942 M2906,116.8 H2942" stroke="#737373" stroke-width="1.8"/><rect x="2960.2" y="94" width="1.6" height="22" fill="#dcdcdc"/><rect x="2981.5" y="93" width="23.2" height="23.4" rx="3.5" fill="none" stroke="#737373" stroke-width="2"/><path d="M2989.3,93 V116.4 M2993.3,105.1 H3001.3 M2997.3,101.1 V109.1" stroke="#737373" stroke-width="2"/><rect x="563.5" y="148.2" width="24.6" height="23.6" rx="4.5" fill="#2b74f0"/><rect x="565.6" y="150.3" width="20.4" height="19.4" rx="3" fill="none" stroke="#d0e2ff" stroke-width="1"/><g fill="none" stroke="#ffffff" stroke-width="1.8" stroke-linecap="round"><path d="M573.8,152.9 L580.6,165.1"/><path d="M577.8,152.9 L572.7,161.7"/><path d="M569.3,162.0 L582.3,162.0"/><path d="M570.7,165.1 L571.5,164.1"/></g><path d="M698.8,152.2 L704.2,161.4 L698.8,170.6" fill="none" stroke="#8a8a8a" stroke-width="1.8" stroke-linecap="round"/><path d="M860.8,152.2 L866.2,161.4 L860.8,170.6" fill="none" stroke="#8a8a8a" stroke-width="1.8" stroke-linecap="round"/><path d="M1049.8,152.2 L1055.2,161.4 L1049.8,170.6" fill="none" stroke="#8a8a8a" stroke-width="1.8" stroke-linecap="round"/><path d="M1328.8,152.2 L1334.2,161.4 L1328.8,170.6" fill="none" stroke="#8a8a8a" stroke-width="1.8" stroke-linecap="round"/><path d="M725,153.5 Q725,150.5 728,150.5 H732.386 Q734.386,150.5 737.386,152.7 H746.7 Q749.7,152.7 749.7,155.7 V166.6 Q749.7,170.1 746.7,170.1 H728 Q725,170.1 725,166.6 Z" fill="#85898d"/><rect x="725.0" y="156.4" width="24.7" height="1.8" fill="#ffffff"/><path d="M887.4,153.5 Q887.4,150.5 890.4,150.5 H894.672 Q896.672,150.5 899.672,152.7 H908.8 Q911.8,152.7 911.8,155.7 V166.6 Q911.8,170.1 908.8,170.1 H890.4 Q887.4,170.1 887.4,166.6 Z" fill="#85898d"/><rect x="887.4" y="156.4" width="24.4" height="1.8" fill="#ffffff"/><path transform="translate(1075.60,150.00) scale(0.8133,0.8385)" d="M28.5,24.5 C26.8,22.6 24.2,21.6 21.2,22.4 C13.5,26.4 4.6,23.9 0,17.2 C5.2,20.6 12,21 16.4,18.2 C11.2,14.2 6.4,9.4 3.2,4.6 C8,8.8 13,12.8 17.2,15.4 C13.2,11.8 9.4,7 6.6,2.6 C11.2,6.8 16.6,11.4 20.6,14 C21.8,9.4 20.6,3.8 17.6,0 C24.4,3.8 28.2,11.4 25.9,18.6 C27.6,20.4 28.6,22.6 28.5,24.5 Z" fill="#f0753f"/><rect x="1351.8" y="146" width="27.2" height="27.4" rx="5" fill="#3478f2"/><path d="M1357.8,167.2 V152.6 L1365.4,162.6 L1373,152.6 V167.2" fill="none" stroke="#fff" stroke-width="2.6" stroke-linejoin="round"/><path d="M655.6,319.2 L661.4,325.0 L655.6,330.8" fill="none" stroke="#f5f5f5" stroke-width="2.6" stroke-linecap="round" stroke-linejoin="round"/><path d="M655.6,407.2 L661.4,413.0 L655.6,418.8" fill="none" stroke="#f5f5f5" stroke-width="2.6" stroke-linecap="round" stroke-linejoin="round"/><path d="M655.6,495.2 L661.4,501.0 L655.6,506.8" fill="none" stroke="#f5f5f5" stroke-width="2.6" stroke-linecap="round" stroke-linejoin="round"/><path d="M572.5,1852.4 H591.8 Q593.8,1852.4 595,1854.2 L598.2,1859.4 Q598.8,1860.8 598.2,1862.2 L595,1867.4 Q593.8,1869.4 591.8,1869.4 H572.5 Q569.2,1869.4 569.2,1866 V1855.8 Q569.2,1852.4 572.5,1852.4 Z" fill="#2f7df6"/><rect x="2954.2" y="1849.5" width="1.6" height="22.5" fill="#dedede"/><rect x="2974.4" y="1849.4" width="23.6" height="23.4" rx="4.5" fill="none" stroke="#6f6f6f" stroke-width="2"/><rect x="2977.4" y="1864.4" width="17.6" height="5.6" rx="2.8" fill="#7a7a7a"/></svg>
</body></html>
